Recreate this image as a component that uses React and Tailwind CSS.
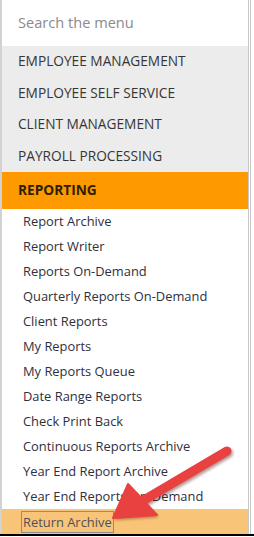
import React from "react";

const sections = [
  "EMPLOYEE MANAGEMENT",
  "EMPLOYEE SELF SERVICE",
  "CLIENT MANAGEMENT",
  "PAYROLL PROCESSING",
];

const reports = [
  "Report Archive",
  "Report Writer",
  "Reports On-Demand",
  "Quarterly Reports On-Demand",
  "Client Reports",
  "My Reports",
  "My Reports Queue",
  "Date Range Reports",
  "Check Print Back",
  "Continuous Reports Archive",
  "Year End Report Archive",
  "Year End Reports On-Demand",
];

function Arrow() {
  return (
    <svg
      className="absolute left-0 top-0 pointer-events-none"
      width="254"
      height="537"
      viewBox="0 0 254 537"
    >
      <defs>
        <filter id="shadow" x="-20%" y="-20%" width="140%" height="140%">
          <feGaussianBlur stdDeviation="1.5" />
        </filter>
      </defs>
      {/* shadow */}
      <g transform="translate(1.5 2)" filter="url(#shadow)" opacity="0.45">
        <line x1="227" y1="451" x2="144" y2="500" stroke="#5a1010" strokeWidth="9" strokeLinecap="round" />
        <polygon points="113,518 128,484 157,515" fill="#5a1010" />
      </g>
      <line x1="227" y1="451" x2="144" y2="500" stroke="#e9413f" strokeWidth="9" strokeLinecap="round" />
      <polygon points="113,518 128,484 157,515" fill="#e9413f" strokeLinejoin="round" stroke="#e9413f" strokeWidth="2" />
    </svg>
  );
}

export default function App() {
  return (
    <div className="relative w-[254px] h-[537px] overflow-hidden bg-white font-['Open_Sans',sans-serif]">
      <div className="flex h-[534px]">
        <div className="w-[248px] border-l-2 border-[#d2d2d2] flex flex-col">
          {/* Search */}
          <div className="h-[46px] flex items-center pl-[16px] bg-white">
            <input
              className="w-full bg-transparent outline-none text-[14.6px] text-[#444] placeholder:text-[#8a8a8a]"
              placeholder="Search the menu"
            />
          </div>

          {/* Top sections */}
          <div className="bg-[#ececec]">
            {sections.map((s) => (
              <div
                key={s}
                className="h-[31.5px] flex items-center pl-[16px] text-[13.7px] text-[#363636]"
              >
                {s}
              </div>
            ))}
          </div>

          {/* Active section */}
          <div className="h-[37px] flex items-center pl-[16px] bg-[#ff9900] text-[13.7px] font-bold text-[#2e2100]">
            REPORTING
          </div>

          {/* Reports */}
          <div className="flex flex-col">
            {reports.map((r) => (
              <div
                key={r}
                className="h-[25px] flex items-center pl-[21px] text-[12.9px] text-[#2f2f3c]"
              >
                {r}
              </div>
            ))}
            <div className="h-[25px] flex items-center pl-[20px] bg-[#f8c477] text-[12.9px] text-[#50505a]">
              <span className="outline outline-1 outline-[#8c8c8c] px-[1px] leading-[20px]">
                Return Archive
              </span>
            </div>
          </div>
        </div>
        <div className="w-[1px] bg-[#c8c8c8]" />
        <div className="w-[1px] bg-white" />
        <div className="w-[1px] bg-[#c8c8c8]" />
        <div className="flex-1 bg-white" />
      </div>
      <div className="h-[2px] bg-black" />

      <Arrow />
    </div>
  );
}
